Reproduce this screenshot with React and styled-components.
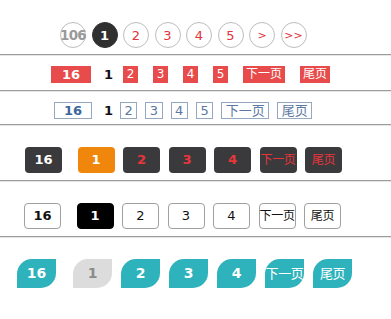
import React from "react";
import styled, { createGlobalStyle, css } from "styled-components";

const Global = createGlobalStyle`
  html, body { margin: 0; padding: 0; background: #fff; }
  body { font-family: "DejaVu Sans", Verdana, "Noto Sans CJK SC", sans-serif; }
  * { box-sizing: border-box; }
`;

const Page = styled.div`
  width: 391px;
  height: 319px;
  overflow: hidden;
  background: #fff;
`;

const Section = styled.div`
  display: flex;
  align-items: center;
  padding: ${(p) => p.$pad};
`;

const Rule = styled.div`
  height: 2px;
  border-top: 1px solid #9c9c9c;
  border-bottom: 1px solid #e6e6e6;
`;

/* Row 1 — circles */
const CircleRow = styled(Section)`
  gap: 5.5px;
`;
const Circle = styled.span`
  width: 26px;
  height: 26px;
  border-radius: 50%;
  display: flex;
  align-items: center;
  justify-content: center;
  font-size: 13px;
  color: #e2323c;
  border: 1px solid #bdbdbd;
  background: #fff;
  white-space: nowrap;
  ${(p) =>
    p.$variant === "total" &&
    css`
      color: #9a9a9a;
      font-weight: bold;
      font-size: 13.5px;
      letter-spacing: -0.8px;
    `}
  ${(p) =>
    p.$variant === "current" &&
    css`
      background: #303030;
      border-color: #303030;
      color: #fff;
      font-weight: bold;
    `}
  ${(p) =>
    p.$variant === "arrow" &&
    css`
      font-size: 11px;
    `}
`;

/* Row 2 — flat red */
const RedBox = styled.span`
  height: 17px;
  line-height: 17px;
  min-width: 15px;
  padding: 0 3px;
  margin-right: 15px;
  text-align: center;
  background: #e84b4b;
  color: #fff;
  font-size: 12px;
  white-space: nowrap;
  font-family: "DejaVu Sans", "Noto Sans CJK SC", sans-serif;
  ${(p) =>
    p.$total &&
    css`
      width: 40px;
      font-weight: bold;
      font-size: 13px;
      margin-right: 13px;
    `}
`;
const PlainCurrent = styled.span`
  font-weight: bold;
  font-size: 13px;
  color: #111;
  margin-right: ${(p) => p.$after}px;
`;

/* Row 3 — outlined blue */
const BlueBox = styled.span`
  height: 17px;
  line-height: 15px;
  min-width: 17px;
  padding: 0 3.5px;
  margin-right: 8px;
  text-align: center;
  border: 1px solid #94a8c2;
  color: #5a78a0;
  font-size: 13px;
  white-space: nowrap;
  font-family: "DejaVu Sans", "Noto Sans CJK SC", sans-serif;
  ${(p) =>
    p.$total &&
    css`
      width: 38px;
      font-weight: bold;
      color: #3a679c;
      margin-right: 12px;
    `}
`;

/* Rows 4 & 5 — rounded tiles */
const TileRow = styled(Section)`
  gap: 8.5px;
`;
const Tile = styled.span`
  width: 37px;
  height: 26px;
  line-height: 26px;
  border-radius: 4px;
  text-align: center;
  white-space: nowrap;
  overflow: visible;
  font-size: ${(p) => (p.$cjk ? "12px" : "13px")};
  font-weight: ${(p) => (p.$cjk ? "normal" : "bold")};
  font-family: "DejaVu Sans", "Noto Sans CJK SC", sans-serif;
  letter-spacing: ${(p) => (p.$cjk ? "-0.3px" : "0")};
  ${(p) => p.$first && css`margin-right: 7px;`}
`;
const DarkTile = styled(Tile)`
  background: ${(p) => (p.$current ? "#f0870c" : "#3a3a3c")};
  color: ${(p) => (p.$current || p.$first ? "#fff" : "#e8353c")};
`;
const LightTile = styled(Tile)`
  background: ${(p) => (p.$current ? "#000" : "#fff")};
  border: 1px solid ${(p) => (p.$current ? "#000" : "#a0a0a0")};
  line-height: 24px;
  color: ${(p) => (p.$current ? "#fff" : "#111")};
  font-weight: ${(p) => (p.$current || p.$first ? "bold" : "normal")};
`;

/* Row 6 — teal leaves */
const LeafRow = styled(Section)`
  gap: 9px;
`;
const Leaf = styled.span`
  width: 39px;
  height: 29px;
  line-height: 29px;
  border-radius: 15px 0;
  text-align: center;
  white-space: nowrap;
  background: ${(p) => (p.$current ? "#dcdcdc" : "#2eb2bc")};
  color: ${(p) => (p.$current ? "#8a8a8a" : "#fff")};
  font-size: ${(p) => (p.$cjk ? "13px" : "14px")};
  font-weight: ${(p) => (p.$cjk ? "normal" : "bold")};
  font-family: "DejaVu Sans", "Noto Sans CJK SC", sans-serif;
  letter-spacing: ${(p) => (p.$cjk ? "-0.4px" : "0")};
  ${(p) => p.$first && css`margin-right: 8px;`}
`;

const nums = ["2", "3", "4", "5"];
const tiles = ["2", "3", "4"];

export default function App() {
  return (
    <Page>
      <Global />
      <CircleRow $pad="22px 0 6px 60px">
        <Circle $variant="total">106</Circle>
        <Circle $variant="current">1</Circle>
        {nums.map((n) => (
          <Circle key={n}>{n}</Circle>
        ))}
        <Circle $variant="arrow">&gt;</Circle>
        <Circle $variant="arrow">&gt;&gt;</Circle>
      </CircleRow>
      <Rule />
      <Section $pad="10px 0 7px 51px">
        <RedBox $total>16</RedBox>
        <PlainCurrent $after={10}>1</PlainCurrent>
        {nums.map((n) => (
          <RedBox key={n}>{n}</RedBox>
        ))}
        <RedBox>下一页</RedBox>
        <RedBox>尾页</RedBox>
      </Section>
      <Rule />
      <Section $pad="10px 0 5px 54px">
        <BlueBox $total>16</BlueBox>
        <PlainCurrent $after={7}>1</PlainCurrent>
        {nums.map((n) => (
          <BlueBox key={n}>{n}</BlueBox>
        ))}
        <BlueBox>下一页</BlueBox>
        <BlueBox>尾页</BlueBox>
      </Section>
      <Rule />
      <TileRow $pad="21px 0 7px 25px">
        <DarkTile $first>16</DarkTile>
        <DarkTile $current>1</DarkTile>
        {tiles.map((n) => (
          <DarkTile key={n}>{n}</DarkTile>
        ))}
        <DarkTile $cjk>下一页</DarkTile>
        <DarkTile $cjk>尾页</DarkTile>
      </TileRow>
      <Rule />
      <TileRow $pad="21px 0 7px 24px">
        <LightTile $first>16</LightTile>
        <LightTile $current>1</LightTile>
        {tiles.map((n) => (
          <LightTile key={n}>{n}</LightTile>
        ))}
        <LightTile $cjk>下一页</LightTile>
        <LightTile $cjk>尾页</LightTile>
      </TileRow>
      <Rule />
      <LeafRow $pad="21px 0 0 17px">
        <Leaf $first>16</Leaf>
        <Leaf $current>1</Leaf>
        {tiles.map((n) => (
          <Leaf key={n}>{n}</Leaf>
        ))}
        <Leaf $cjk>下一页</Leaf>
        <Leaf $cjk>尾页</Leaf>
      </LeafRow>
    </Page>
  );
}
